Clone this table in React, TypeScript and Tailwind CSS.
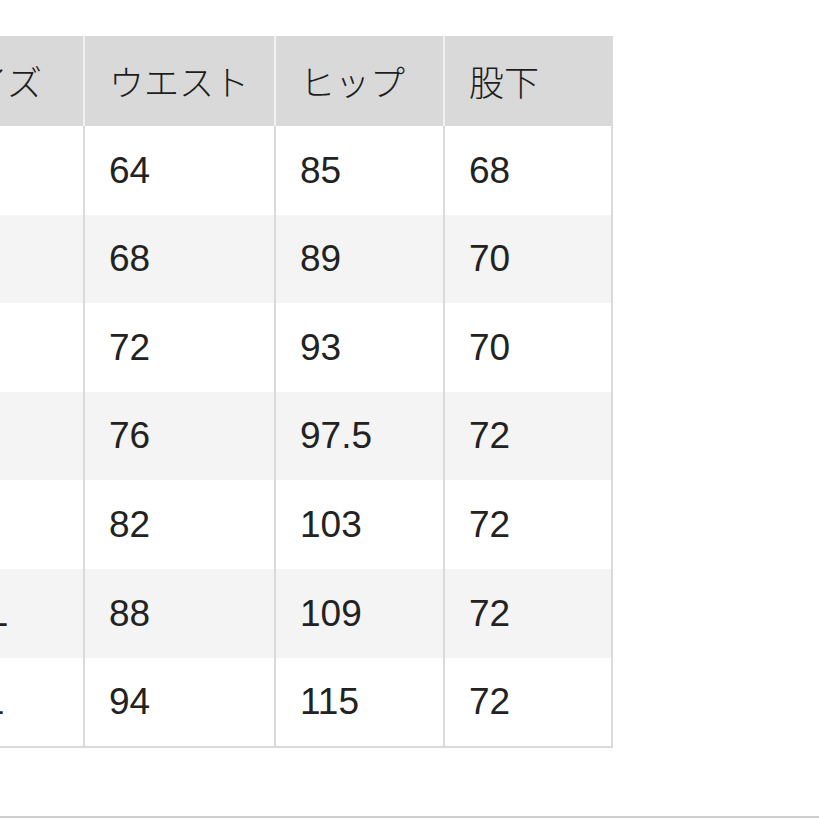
import React from 'react';

const headers = ['サイズ', 'ウエスト', 'ヒップ', '股下'];

const rows = [
  ['XS', '64', '85', '68'],
  ['S', '68', '89', '70'],
  ['M', '72', '93', '70'],
  ['L', '76', '97.5', '72'],
  ['XL', '82', '103', '72'],
  ['XXL', '88', '109', '72'],
  ['3XL', '94', '115', '72'],
];

const widths = ['w-[171px]', 'w-[191px]', 'w-[169px]', 'w-[168px]'];

export default function App() {
  return (
    <div
      className="w-[819px] h-[819px] bg-white overflow-hidden flex flex-col text-[#1e1e1e]"
      style={{ fontFamily: '"Liberation Sans", "Noto Sans CJK JP", sans-serif' }}
    >
      <div className="pt-[36px] ml-[-86px] flex flex-col w-[699px]">
        {/* header */}
        <div className="flex h-[90px] bg-[#d9d9d9]">
          {headers.map((h, i) => (
            <div
              key={h}
              className={`${widths[i]} shrink-0 flex items-center pl-6 text-[35px] font-light border-r-2 ${
                i === 3 ? 'border-[#d9d9d9]' : 'border-[#f2f2f2]'
              }`}
              style={{ fontFamily: '"Noto Sans CJK JP", sans-serif' }}
            >
              {h}
            </div>
          ))}
        </div>
        {/* body */}
        <div className="flex flex-col border-b-2 border-[#dadada]">
          {rows.map((r, ri) => (
            <div key={ri} className={`flex h-[88.6px] ${ri % 2 === 1 ? 'bg-[#f4f4f4]' : 'bg-white'}`}>
              {r.map((c, ci) => (
                <div
                  key={ci}
                  className={`${widths[ci]} shrink-0 flex items-center pl-6 text-[37px] text-[#222] border-r-2 border-[#dadada]`}
                >
                  {c}
                </div>
              ))}
            </div>
          ))}
        </div>
      </div>
      <div className="mt-auto mb-[1px] h-[2px] w-full bg-[#cfcfcf]" />
    </div>
  );
}
